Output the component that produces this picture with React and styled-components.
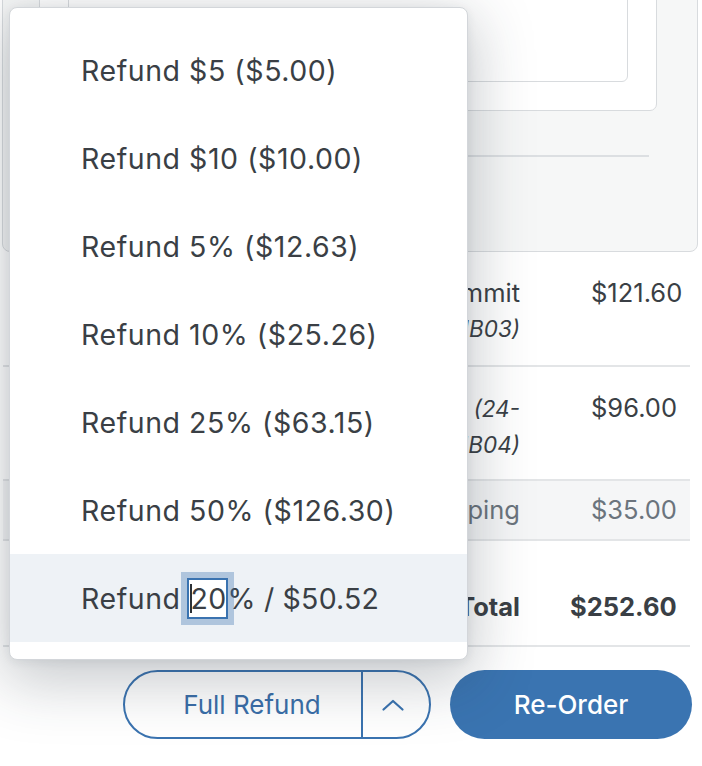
import React from 'react';
import styled, { createGlobalStyle } from 'styled-components';

const GlobalStyle = createGlobalStyle`
    html, body {
        margin: 0;
        padding: 0;
        background: #ffffff;
        overflow: hidden;
    }
    body {
        font-family: Inter, "Noto Sans", "Liberation Sans", sans-serif;
        color: #3a3f45;
    }
`

const Page = styled.div`
    position: relative;
    width: 702px;
    height: 766px;
    overflow: hidden;
`

const Panel = styled.div`
    margin: -40px 4px 0 2px;
    height: 292px;
    box-sizing: border-box;
    padding: 0 40px 0 36px;
    background: #f6f7f7;
    border: 1.5px solid #d8dbde;
    border-radius: 8px;
    display: flex;
    flex-direction: column;
`

const Card = styled.div`
    margin-top: -30px;
    height: 180px;
    box-sizing: border-box;
    padding: 0 28px 28px 28px;
    background: #ffffff;
    border: 1.5px solid #d8dbde;
    border-radius: 7px;
    display: flex;
`

const NoteBox = styled.div`
    flex: 1;
    background: #ffffff;
    border: 1.5px solid #d8dbde;
    border-radius: 6px;
`

const Rule = styled.div`
    margin: 44px 8px 0 14px;
    height: 2px;
    background: #dcdfe2;
`

const Table = styled.div`
    margin: 0 12px 0 3px;
    display: flex;
    flex-direction: column;
`

const Row = styled.div`
    display: grid;
    grid-template-columns: 1fr 120px;
    height: ${p => p.$h}px;
    box-sizing: border-box;
    padding-top: ${p => p.$top}px;
    border-bottom: 2px solid #e3e5e7;
    background: ${p => (p.$muted ? '#f5f6f7' : 'transparent')};
    color: ${p => (p.$muted ? '#6b747d' : '#3a3f45')};
    font-weight: ${p => (p.$bold ? 700 : 400)};
    font-size: 25.5px;
    line-height: 35px;
`

const Name = styled.div`
    padding-right: 50px;
    text-align: right;
    white-space: nowrap;
`

const Line = styled.div``

const Sku = styled.em`
    font-style: italic;
    font-size: 22.5px;
`

const Price = styled.div`
    padding-left: ${p => p.$indent}px;
    white-space: nowrap;
`

const Actions = styled.div`
    margin-top: 23px;
    padding-right: 10px;
    display: flex;
    justify-content: flex-end;
    gap: 19px;
`

const Split = styled.div`
    display: flex;
    height: 69px;
    box-sizing: border-box;
    border: 2px solid #3a73b0;
    border-radius: 35px;
    overflow: hidden;
`

const SplitMain = styled.button`
    width: 238px;
    border: none;
    border-right: 2px solid #3a73b0;
    background: transparent;
    color: #3a6ea8;
    font-family: inherit;
    font-size: 26px;
    padding: 0 0 0 18px;
`

const SplitToggle = styled.button`
    width: 66px;
    border: none;
    background: transparent;
    display: flex;
    align-items: center;
    justify-content: center;
    padding: 0 6px 0 0;
`

const Primary = styled.button`
    width: 242px;
    height: 69px;
    border: none;
    border-radius: 35px;
    background: #3a74b1;
    color: #ffffff;
    font-family: inherit;
    font-size: 26px;
    font-weight: 500;
`

const Menu = styled.div`
    position: absolute;
    left: 9px;
    top: 7px;
    width: 459px;
    height: 653px;
    box-sizing: border-box;
    padding: 18px 0 0;
    background: #ffffff;
    border: 1px solid #d3d6da;
    border-radius: 8px;
    box-shadow: 0 16px 60px 6px rgba(40, 50, 60, 0.26), 0 2px 10px rgba(40, 50, 60, 0.08);
`

const Option = styled.div`
    height: 88px;
    display: flex;
    align-items: center;
    padding-left: 71px;
    font-size: 28.5px;
    letter-spacing: 0.55px;
    color: #3a3f45;
    background: ${p => (p.$active ? '#eef2f6' : 'transparent')};
    white-space: pre;
`

const AmountWrap = styled.span`
    position: relative;
    display: inline-flex;
    margin: 0 0 0 6px;
    &::before {
        content: '';
        position: absolute;
        left: 3px;
        top: 6px;
        bottom: 6px;
        width: 2px;
        background: #2c3136;
    }
`

const AmountInput = styled.input`
    width: 41px;
    height: 41px;
    box-sizing: border-box;
    padding: 0 0 0 2px;
    border: 2px solid #3a73b0;
    background: #ffffff;
    box-shadow: 0 0 0 6px rgba(58, 115, 176, 0.35);
    font-family: inherit;
    font-size: 28.5px;
    letter-spacing: 0.3px;
    color: #3a3f45;
    outline: none;
`

const Tail = styled.span`
    letter-spacing: 0.2px;
`

const presets = [
    'Refund $5 ($5.00)',
    'Refund $10 ($10.00)',
    'Refund 5% ($12.63)',
    'Refund 10% ($25.26)',
    'Refund 25% ($63.15)',
    'Refund 50% ($126.30)',
];

const App = () => {
    return (
        <Page>
            <GlobalStyle />
            <Panel>
                <Card>
                    <NoteBox />
                </Card>
                <Rule />
            </Panel>
            <Table>
                <Row $h={115} $top={23}>
                    <Name>
                        <Line>Summit</Line>
                        <Line><Sku>(24-UB03)</Sku></Line>
                    </Name>
                    <Price $indent={21}>$121.60</Price>
                </Row>
                <Row $h={114} $top={23}>
                    <Name>
                        <Line>Tee <Sku>(24-</Sku></Line>
                        <Line><Sku>UB04)</Sku></Line>
                    </Name>
                    <Price $indent={21}>$96.00</Price>
                </Row>
                <Row $h={60} $top={11} $muted>
                    <Name>Shipping</Name>
                    <Price $indent={21}>$35.00</Price>
                </Row>
                <Row $h={106} $top={48} $bold>
                    <Name>Total</Name>
                    <Price $indent={0}>$252.60</Price>
                </Row>
            </Table>
            <Actions>
                <Split>
                    <SplitMain>Full Refund</SplitMain>
                    <SplitToggle>
                        <svg width="22" height="12" viewBox="0 0 22 12" fill="none">
                            <path d="M1.5 10.5 L11 2 L20.5 10.5" stroke="#3a73b0" strokeWidth="2.2" strokeLinecap="round" strokeLinejoin="round" />
                        </svg>
                    </SplitToggle>
                </Split>
                <Primary>Re-Order</Primary>
            </Actions>
            <Menu>
                {presets.map(label => (
                    <Option key={label}>{label}</Option>
                ))}
                <Option $active>
                    Refund
                    <AmountWrap>
                        <AmountInput readOnly defaultValue="20" />
                    </AmountWrap>
                    <Tail>% / $50.52</Tail>
                </Option>
            </Menu>
        </Page>
    );
}

export default App;
